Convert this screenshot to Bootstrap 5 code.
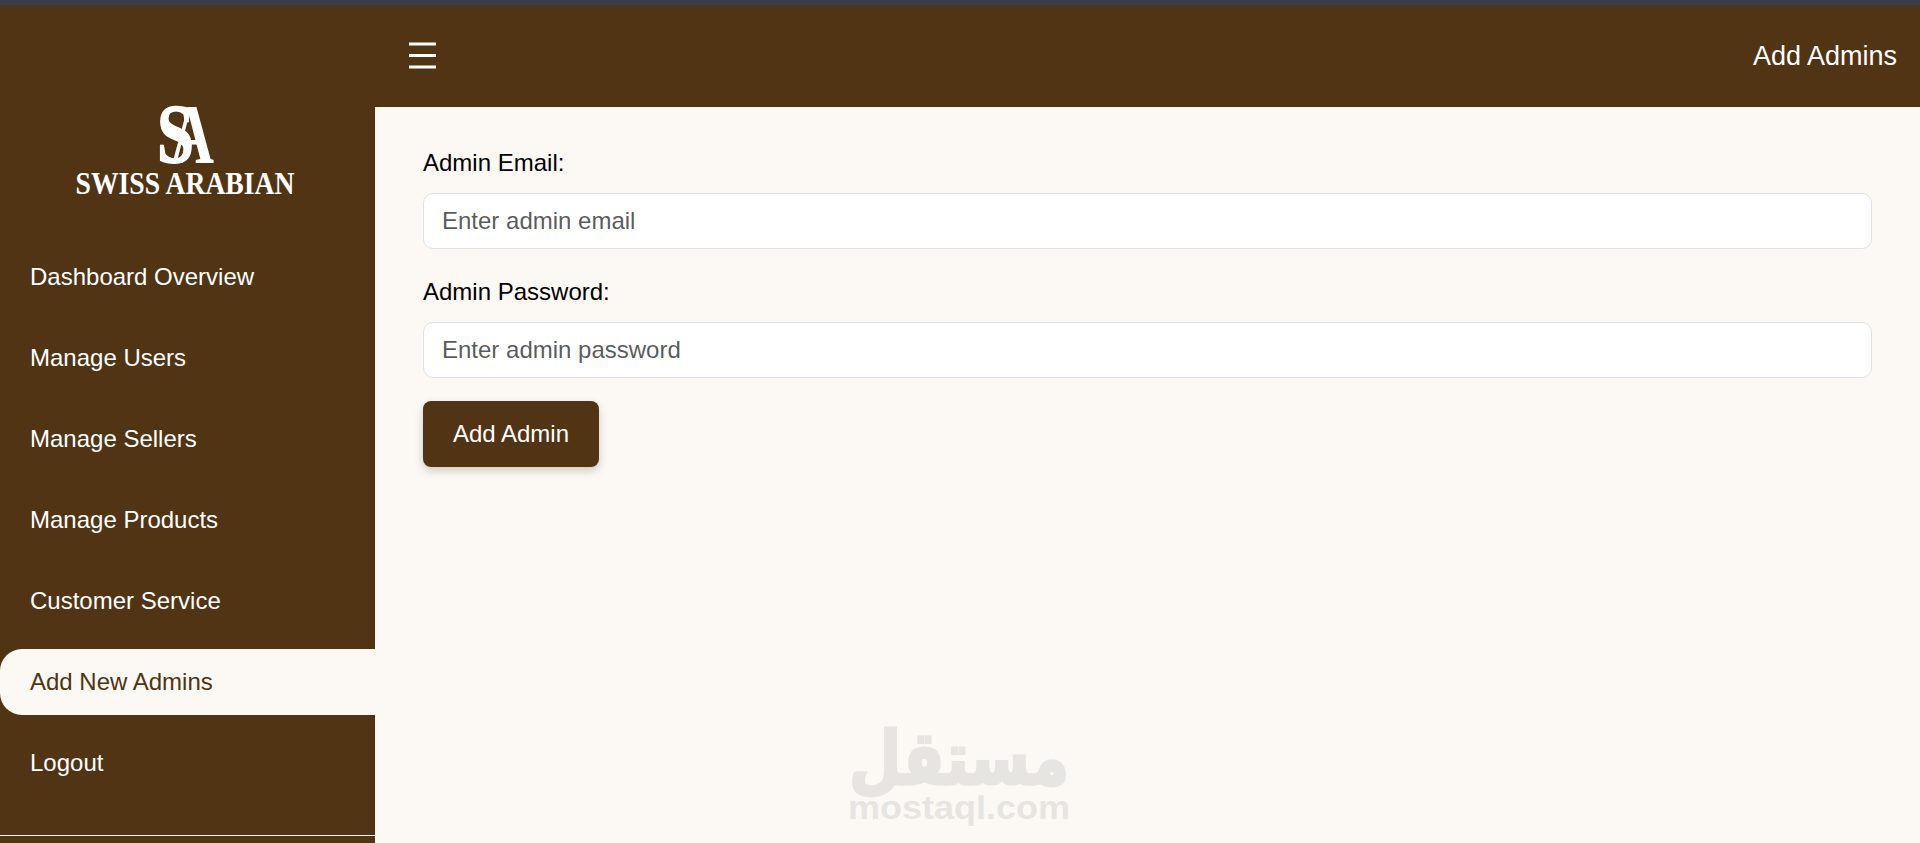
<!DOCTYPE html>
<html lang="en">
<head>
<meta charset="utf-8">
<title>Add Admins</title>
<link href="https://cdn.jsdelivr.net/npm/bootstrap@5.3.0/dist/css/bootstrap.min.css" rel="stylesheet">
<style>
html, body { height: 843px; overflow: hidden; }
body { background: #fcf9f4; font-family: "Liberation Sans", Arial, sans-serif; color: #000; }
.top-strip { height: 5px; background: #3b3b4a; flex: none; }
.shell { height: 838px; }
.side { width: 375px; flex: none; background: #513413; position: relative; }
.side-logo { height: 239px; padding-top: 102px; }
.side-logo svg, .mark-wm { overflow: visible; }
.side-link { height: 66px; margin-bottom: 15px; padding-left: 30px; font-size: 24px; color: #fff; text-decoration: none; border-radius: 22px 0 0 22px; }
.side-link:hover { color: #fff; }
.side-link.is-on { background: #fcf9f4; color: #513413; }
.side-rule { position: absolute; left: 0; right: 0; bottom: 7px; height: 1px; background: #fcf9f4; }
.head { height: 102px; background: #513413; color: #fff; padding: 0 23px 0 34px; flex: none; }
.head-title { font-size: 27px; }
.work { padding: 36px 48px 0; position: relative; flex: 1; }
.fld { margin-bottom: 23px; }
.fld label { font-size: 24px; line-height: 40px; margin-bottom: 10px; display: block; }
.fld .form-control { height: 56px; font-size: 24px; padding: 0 18px; border-radius: 10px; background: #fff; }
.save-btn { background: #513413; color: #fff; border: 0; height: 66px; width: 176px; font-size: 24px; border-radius: 8px; box-shadow: 0 4px 10px rgba(0,0,0,.18); padding: 0; }
.save-btn:hover { background: #513413; color: #fff; }
.mark-wm { position: absolute; left: 473px; top: 610px; width: 222px; height: 128px; }
</style>
</head>
<body class="d-flex flex-column">
<div class="top-strip"></div>
<div class="shell d-flex">
  <aside class="side d-flex flex-column">
    <div class="side-logo d-flex justify-content-center">
      <svg width="230" height="95" viewBox="0 0 230 95" aria-label="Swiss Arabian logo">
        <g fill="#fff" font-family="Liberation Serif, serif" font-weight="700">
          <text x="84" y="56" font-size="84" textLength="37" lengthAdjust="spacingAndGlyphs" stroke="#fff" stroke-width="1.5">S</text>
          <text x="97" y="56" font-size="84" textLength="44" lengthAdjust="spacingAndGlyphs">A</text>
          <text x="2.5" y="87" font-size="31" textLength="219" lengthAdjust="spacingAndGlyphs">SWISS ARABIAN</text>
        </g>
      </svg>
    </div>
    <nav class="d-flex flex-column">
      <a class="side-link d-flex align-items-center" href="#">Dashboard Overview</a>
      <a class="side-link d-flex align-items-center" href="#">Manage Users</a>
      <a class="side-link d-flex align-items-center" href="#">Manage Sellers</a>
      <a class="side-link d-flex align-items-center" href="#">Manage Products</a>
      <a class="side-link d-flex align-items-center" href="#">Customer Service</a>
      <a class="side-link is-on d-flex align-items-center" href="#">Add New Admins</a>
      <a class="side-link d-flex align-items-center" href="#">Logout</a>
    </nav>
    <div class="side-rule"></div>
  </aside>
  <div class="d-flex flex-column flex-grow-1">
    <header class="head d-flex align-items-center justify-content-between">
      <svg width="27" height="28" viewBox="0 0 27 28" aria-label="Menu"><g fill="#fff"><rect y="0.5" width="27" height="3"/><rect y="12" width="27" height="3"/><rect y="23.5" width="27" height="3"/></g></svg>
      <div class="head-title">Add Admins</div>
    </header>
    <main class="work">
      <form>
        <div class="fld">
          <label for="em">Admin Email:</label>
          <input id="em" type="email" class="form-control" placeholder="Enter admin email">
        </div>
        <div class="fld">
          <label for="pw">Admin Password:</label>
          <input id="pw" type="password" class="form-control" placeholder="Enter admin password">
        </div>
        <button type="button" class="btn save-btn">Add Admin</button>
      </form>
      <svg class="mark-wm" viewBox="0 0 222 128" aria-label="mostaql.com">
        <g fill="#e6e5e1">
          <text x="111" y="67" text-anchor="middle" font-family="DejaVu Sans, sans-serif" font-weight="700" font-size="74" textLength="220" lengthAdjust="spacingAndGlyphs" direction="rtl" stroke="#e6e5e1" stroke-width="3">مستقل</text>
          <text x="0" y="102" font-family="Liberation Sans, sans-serif" font-weight="700" font-size="34" textLength="222" lengthAdjust="spacingAndGlyphs">mostaql.com</text>
        </g>
      </svg>
    </main>
  </div>
</div>
</body>
</html>
